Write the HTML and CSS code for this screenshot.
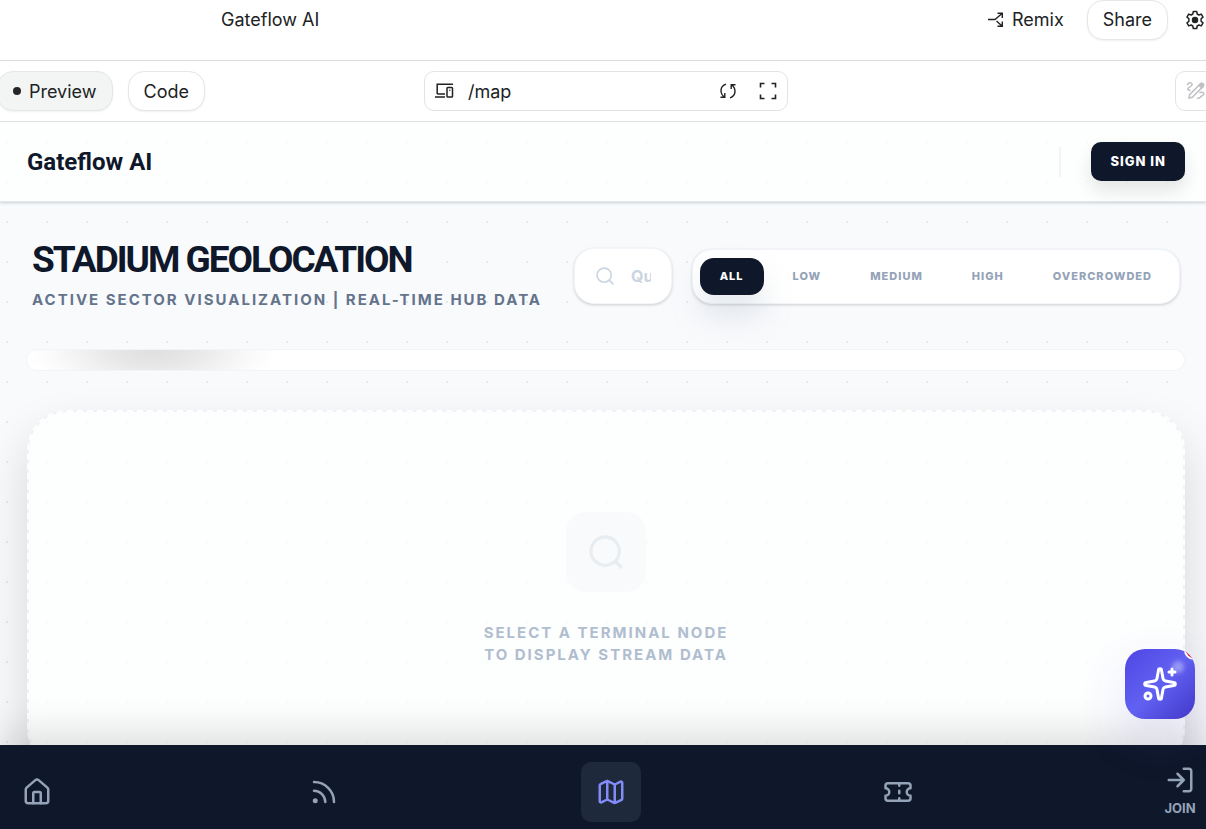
FILE: index.html
```html
<!DOCTYPE html>
<html lang="en">
<head>
<meta charset="utf-8">
<meta name="viewport" content="width=device-width, initial-scale=1">
<title>Gateflow AI</title>
<link rel="stylesheet" href="styles.css">
</head>
<body>
<header class="topbar">
  <span class="project-name">Gateflow AI</span>
  <div class="topbar-actions">
    <button class="remix" type="button">
      <svg width="16" height="16" viewBox="0 0 16 16" fill="none" stroke="currentColor" stroke-width="1.4"><path d="M0 7.500h7L14 1.500M9.500 1.200h4.800V6M8.500 9l5.500 5M14.300 9.500v4.800H9.500"/></svg>
      Remix
    </button>
    <button class="pill" type="button">Share</button>
    <button class="icon-button settings" type="button" aria-label="Settings">
      <svg width="20" height="20" viewBox="0 0 20 20" fill="none" stroke="currentColor" stroke-width="1.500" stroke-linejoin="round"><path d="M8.300 1.500h3.400l.5 2.500 1.700 1 2.400-.9 1.700 3-1.900 1.700v2.400l1.900 1.700-1.700 3-2.400-.9-1.700 1-.5 2.500H8.300L7.800 16l-1.700-1-2.400.9-1.700-3 1.900-1.700V8.800L2 7.100l1.700-3 2.400.9 1.700-1z"/><circle cx="10" cy="10" r="2.500" fill="currentColor"/></svg>
    </button>
  </div>
</header>

<div class="toolbar">
  <div class="tabs">
    <button class="pill pill-active" type="button"><span class="dot"></span>Preview</button>
    <button class="pill" type="button">Code</button>
  </div>
  <div class="address">
    <svg width="20" height="16" viewBox="0 0 20 16" fill="none" stroke="currentColor" stroke-width="1.500"><path d="M18 1.200H2.200V11M0 14h10M2.200 11H10"/><rect x="12" y="4.500" width="5.500" height="9.500" rx=".8"/><path d="M14 7.200h1.500" stroke-width="1"/></svg>
    <input type="text" value="/map" aria-label="Page path">
    <button class="icon-button" type="button" aria-label="Reload">
      <svg width="18" height="18" viewBox="0 0 18 18" fill="none" stroke="currentColor" stroke-width="1.400"><path d="M7 2.200C.5 4.500.8 11.500 5.300 15M1.500 15.300h4.300v-4.200M11 15.800c6.500-2.300 6.200-9.300 1.700-12.800M16.500 2.700h-4.300v4.200"/></svg>
    </button>
    <button class="icon-button" type="button" aria-label="Full screen">
      <svg width="18" height="18" viewBox="0 0 18 18" fill="none" stroke="currentColor" stroke-width="1.600"><path d="M1.500 5.500v-4h4M12.500 1.500h4v4M16.500 12.500v4h-4M5.500 16.500h-4v-4"/></svg>
    </button>
  </div>
  <button class="annotate" type="button" aria-label="Annotate">
    <svg width="20" height="20" viewBox="0 0 20 20" fill="none" stroke="currentColor" stroke-width="1.500" stroke-linecap="round"><path d="M3 17l.6-3.300L14.500 2.800c1.600-1.600 4.200 1 2.600 2.600L6.300 16.300z"/><path d="M14.500 2.800c1.600-1.600 4.200 1 2.600 2.600l-1.500 1.500-2.600-2.600z" fill="currentColor"/><path d="M1.500 3.500C4-.5 8 3 5 5S0 8.500 4 9.500M14 11.500c4-1 5 1.500 2.500 3s-3 3.500-5 2.500"/></svg>
  </button>
</div>

<div class="app">
  <header class="app-header">
    <a class="brand" href="#">Gateflow AI</a>
    <div class="account">
      <span class="divider"></span>
      <button class="sign-in" type="button">SIGN IN</button>
    </div>
  </header>

  <main class="content">
    <section class="intro">
      <div class="titles">
        <h1>STADIUM GEOLOCATION</h1>
        <p>ACTIVE SECTOR VISUALIZATION | REAL-TIME HUB DATA</p>
      </div>
      <label class="search">
        <svg width="20" height="20" viewBox="0 0 24 24" fill="none" stroke="currentColor" stroke-width="2" stroke-linecap="round"><circle cx="11" cy="11" r="8.500"/><path d="M17.200 17.200L21.500 21.500"/></svg>
        <input type="text" placeholder="Query sectors" aria-label="Query sectors">
      </label>
      <div class="filters">
        <button class="selected" type="button">ALL</button>
        <button type="button">LOW</button>
        <button type="button">MEDIUM</button>
        <button type="button">HIGH</button>
        <button type="button">OVERCROWDED</button>
      </div>
    </section>

    <div class="map-strip"></div>

    <section class="empty-state">
      <div class="empty-icon">
        <svg width="40" height="40" viewBox="0 0 24 24" fill="none" stroke="currentColor" stroke-width="2" stroke-linecap="round"><circle cx="11.500" cy="11.500" r="8.500"/><path d="M17.700 17.700L21 21"/></svg>
      </div>
      <p>SELECT A TERMINAL NODE<br>TO DISPLAY STREAM DATA</p>
    </section>
  </main>
</div>

<nav class="bottom-nav" aria-label="Main">
  <a href="#" aria-label="Home"><svg viewBox="0 0 24 24"><path d="M15 21v-8a1 1 0 0 0-1-1h-4a1 1 0 0 0-1 1v8"/><path d="M3 10a2 2 0 0 1 .7-1.500l7-6a2 2 0 0 1 2.600 0l7 6A2 2 0 0 1 21 10v9a2 2 0 0 1-2 2H5a2 2 0 0 1-2-2z"/></svg></a>
  <a href="#" aria-label="Feed"><svg viewBox="0 0 24 24"><path d="M4 11a9 9 0 0 1 9 9M4 4a16 16 0 0 1 16 16"/><circle cx="5" cy="19" r="1"/></svg></a>
  <a class="current" href="#" aria-label="Map"><svg viewBox="0 0 24 24"><path d="M14.100 5.600a2 2 0 0 0 1.800 0l3.700-1.900A1 1 0 0 1 21 4.600v12.800a1 1 0 0 1-.6.900l-4.500 2.200a2 2 0 0 1-1.800 0l-4.200-2.100a2 2 0 0 0-1.800 0l-3.700 1.900A1 1 0 0 1 3 19.400V6.600a1 1 0 0 1 .6-.9l4.500-2.200a2 2 0 0 1 1.800 0zM15 5.800v15M9 3.200v15"/></svg></a>
  <a href="#" aria-label="Tickets"><svg viewBox="0 0 24 24"><path d="M2 9a3 3 0 0 1 0 6v2a2 2 0 0 0 2 2h16a2 2 0 0 0 2-2v-2a3 3 0 0 1 0-6V7a2 2 0 0 0-2-2H4a2 2 0 0 0-2 2zM13 5v2M13 17v2M13 11v2"/></svg></a>
  <a class="join" href="#"><svg viewBox="0 0 24 24"><path d="M15 3h4a2 2 0 0 1 2 2v14a2 2 0 0 1-2 2h-4M10 17l5-5-5-5M15 12H3"/></svg>JOIN</a>
</nav>

<button class="assistant" type="button" aria-label="Open assistant">
  <svg width="36" height="36" viewBox="0 0 24 24" fill="none" stroke="currentColor" stroke-width="2" stroke-linecap="round" stroke-linejoin="round"><path d="M11 2.800a1 1 0 0 1 2 0l1 5.600a2 2 0 0 0 1.600 1.600l5.600 1a1 1 0 0 1 0 2l-5.600 1a2 2 0 0 0-1.600 1.600l-1 5.600a1 1 0 0 1-2 0l-1-5.600A2 2 0 0 0 8.400 14l-5.600-1a1 1 0 0 1 0-2l5.600-1A2 2 0 0 0 10 8.400zM20 2v4M22 4h-4"/><circle cx="4" cy="20" r="2"/></svg>
  <span class="glint"></span>
  <span class="alert"></span>
</button>
</body>
</html>
```
FILE: styles.css
```css
* { box-sizing: border-box; }

body {
  margin: 0;
  height: 100vh;
  display: flex;
  flex-direction: column;
  overflow: hidden;
  position: relative;
  background: #fff;
  color: #202224;
  font-family: Inter, "Liberation Sans", sans-serif;
}

button, input { font: inherit; color: inherit; }
button { cursor: pointer; flex: none; }
a { color: inherit; text-decoration: none; }
svg { display: block; flex: none; }

/* Editor bars */
.topbar {
  flex: none;
  display: flex;
  justify-content: space-between;
  align-items: flex-start;
  height: 61px;
  padding-left: 221px;
  border-bottom: 1px solid #dcdcdc;
  font-size: 18px;
  line-height: 40px;
}

.topbar-actions { display: flex; align-items: center; }

.remix {
  display: flex;
  align-items: center;
  gap: 8px;
  padding: 0;
  margin-right: 23px;
  border: 0;
  background: none;
}

.pill {
  display: flex;
  align-items: center;
  height: 40px;
  padding: 0 15px;
  border: 1px solid #e5e6e6;
  border-radius: 16px;
  background: #fff;
  box-shadow: 0 1px 2px rgba(0, 0, 0, .06);
}

.icon-button { padding: 0; border: 0; background: none; }
.settings { margin-left: 17px; margin-right: 1px; }

.toolbar {
  flex: none;
  display: grid;
  grid-template-columns: 1fr 364px 1fr;
  align-items: center;
  height: 61px;
  border-bottom: 1px solid #e1e1e1;
  font-size: 18px;
}

.tabs { display: flex; gap: 15px; margin-left: -3px; }
.pill-active { background: #f3f5f4; gap: 8px; }
.dot { width: 8px; height: 8px; border-radius: 50%; background: #242628; }

.address {
  display: flex;
  align-items: center;
  height: 40px;
  padding: 0 10px;
  border: 1px solid #e2e3e3;
  border-radius: 10px;
  margin: 0 0 0 3px;
  width: 364px;
}

.address input {
  flex: 1;
  min-width: 0;
  margin-left: 13px;
  padding: 0;
  border: 0;
  outline: 0;
  background: none;
}

.address .icon-button + .icon-button { margin-left: 22px; }

.annotate {
  justify-self: end;
  width: 40px;
  height: 40px;
  padding: 0 10px;
  margin-right: -9px;
  border: 1px solid #e2e3e3;
  border-radius: 10px;
  background: #fff;
  color: #bfc1c4;
}

/* Previewed application */
.app {
  flex: 1;
  min-height: 0;
  overflow: hidden;
  background: radial-gradient(circle at center, #e6e8ec 1px, transparent 1px) -13px 0 / 40px 40px, #f9fafc;
}

.app-header {
  position: relative;
  display: flex;
  justify-content: space-between;
  align-items: center;
  height: 80px;
  padding: 0 21px 0 27px;
  background: rgba(255, 255, 255, .7);
  border-bottom: 1px solid #e2e8f0;
  box-shadow: 0 1px 3px rgba(0, 0, 0, .18);
}

.brand, h1 { font-family: Roboto, Inter, sans-serif; }

.brand {
  color: #0f172a;
  font-size: 24px;
  font-weight: 700;
}

.account { display: flex; align-items: center; gap: 30px; }
.divider { width: 2px; height: 30px; background: #f1f5f9; }

.sign-in {
  height: 39px;
  padding: 0 19px 2px;
  border: 0;
  border-radius: 10px;
  background: #0f172a;
  color: #fff;
  font-size: 13px;
  font-weight: 800;
  letter-spacing: 1px;
  box-shadow: 0 10px 18px rgba(0, 0, 0, .1);
}

.content { padding: 38px 21px 40px 26px; }

.intro {
  display: flex;
  align-items: center;
  height: 72px;
  padding: 0 5px 0 6px;
}

.titles {
  flex: none;
  padding-bottom: 2px;
  white-space: nowrap;
}

h1 {
  margin: 0;
  color: #0f172a;
  font-size: 37px;
  font-weight: 700;
  line-height: 40px;
  letter-spacing: -2px;
}

.titles p {
  margin: 10px 0 0;
  color: #64748b;
  font-size: 15px;
  font-weight: 700;
  line-height: 20px;
  letter-spacing: 2px;
}

.search {
  flex: 1;
  min-width: 0;
  display: flex;
  align-items: center;
  gap: 16px;
  height: 56px;
  margin: 0 20px 0 32px;
  padding: 0 20px;
  border: 1px solid #f1f5f9;
  border-radius: 20px;
  background: #fff;
  color: #cbd5e1;
  box-shadow: 0 1px 3px rgba(0, 0, 0, .18);
}

.search input {
  flex: 1;
  width: 0;
  min-width: 0;
  padding: 0;
  border: 0;
  outline: 0;
  background: none;
  font-size: 16px;
  font-weight: 700;
}

.search input::placeholder { color: #cbd5e1; opacity: 1; }

.filters {
  flex: none;
  display: flex;
  gap: 9px;
  padding: 8px 7px;
  border: 1px solid #f1f5f9;
  border-radius: 20px;
  background: #fff;
  box-shadow: 0 1px 3px rgba(0, 0, 0, .18);
}

.filters button {
  height: 37px;
  padding: 0 20px;
  border: 0;
  border-radius: 14px;
  background: none;
  color: #94a3b8;
  font-size: 11px;
  font-weight: 800;
  letter-spacing: 1px;
}

.filters .selected {
  background: #0f172a;
  color: #fff;
  box-shadow: 0 20px 30px rgba(148, 163, 184, .25);
}

.map-strip {
  height: 22px;
  margin-top: 37px;
  border: 1px solid #f1f5f9;
  border-radius: 11px;
  background: radial-gradient(ellipse 125px 50px at 126px 0, #dfdfdf 0, #e8e8e8 35%, #fafafa 80%, transparent 100%), #fff;
}

.empty-state {
  display: flex;
  flex-direction: column;
  align-items: center;
  margin: 39px 0 0 1px;
  padding: 100px 20px;
  border: 2px dashed #fff;
  border-radius: 40px;
  background:
    radial-gradient(circle at center, #f8f9fa 1px, transparent 1px) -2px -10px / 40px 40px padding-box,
    linear-gradient(#fdfefe, #fdfefe) padding-box,
    linear-gradient(#f1f2f7, #f1f2f7) border-box;
  box-shadow: 0 25px 50px rgba(0, 0, 0, .14);
}

.empty-icon {
  display: grid;
  place-items: center;
  width: 80px;
  height: 80px;
  border-radius: 20px;
  background: #f9fafc;
  color: #e8edf2;
}

.empty-state p {
  margin: 30px 0 0;
  color: #b0bdcf;
  font-size: 15px;
  font-weight: 700;
  line-height: 22px;
  letter-spacing: 2px;
  text-align: center;
}

/* Bottom navigation */
.bottom-nav {
  flex: none;
  position: relative;
  display: flex;
  justify-content: space-between;
  height: 84px;
  padding: 17px 1px 7px 7px;
  background: #0f172a;
  color: #94a3b8;
  box-shadow: 0 -10px 40px rgba(0, 0, 0, .14);
}

.bottom-nav a {
  display: flex;
  flex-direction: column;
  align-items: center;
  justify-content: center;
  width: 60px;
  height: 60px;
  border-radius: 10px;
}

.bottom-nav svg {
  width: 30px;
  height: 30px;
  fill: none;
  stroke: currentColor;
  stroke-width: 2;
  stroke-linecap: round;
  stroke-linejoin: round;
}

.bottom-nav .current { background: #1e293b; color: #818cf8; }

.bottom-nav .join {
  justify-content: flex-start;
  width: 50px;
  gap: 5px;
  padding-top: 3px;
  font-size: 13px;
  font-weight: 700;
  line-height: 16px;
}

/* Floating assistant */
.assistant {
  position: absolute;
  right: 11px;
  bottom: 110px;
  display: grid;
  place-items: center;
  width: 70px;
  height: 70px;
  padding: 0;
  border: 0;
  border-radius: 20px;
  overflow: hidden;
  background: linear-gradient(135deg, #4f46e5 0%, #6161f1 50%, #4338ca 100%);
  color: #fff;
  box-shadow: 0 20px 50px rgba(79, 70, 229, .12);
}

.glint {
  position: absolute;
  top: 12px;
  right: 11px;
  width: 12px;
  height: 12px;
  border-radius: 50%;
  background: rgba(255, 255, 255, .35);
  filter: blur(2px);
}

.alert {
  position: absolute;
  top: -9px;
  right: -9px;
  width: 20px;
  height: 20px;
  border: 2px solid #fff;
  border-radius: 50%;
  background: #ef2038;
}
```
